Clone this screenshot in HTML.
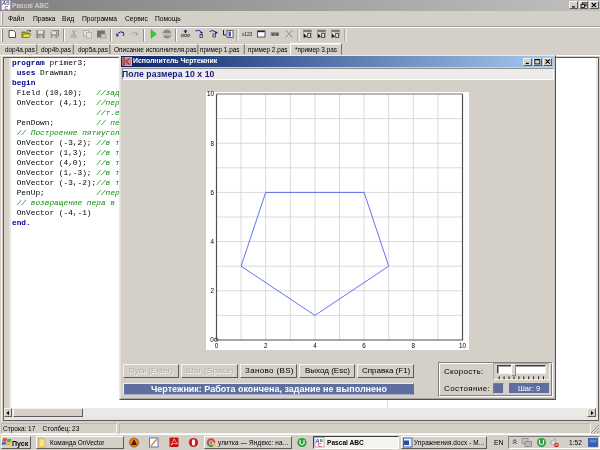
<!DOCTYPE html>
<html><head><meta charset="utf-8">
<style>
*{margin:0;padding:0;box-sizing:border-box}
html,body{width:600px;height:450px;overflow:hidden;background:#D4D0C8;font-family:"Liberation Sans",sans-serif;position:relative}
.a{position:absolute}
.t{will-change:transform;position:absolute;white-space:pre;font-size:6.7px;color:#000;line-height:1}
.btn{position:absolute;background:#D4D0C8;border:1px solid;border-color:#F4F3F0 #5A5A5A #5A5A5A #F4F3F0}
.code{will-change:transform;position:absolute;font-family:"Liberation Mono",monospace;font-size:7.8px;white-space:pre;line-height:10px;color:#000}
.kw{color:#000090;font-weight:bold}
.cm{color:#109010;font-style:italic}
.dis{color:#ACACAC;text-shadow:0.5px 0.5px 0 #F8F8F8}
svg{will-change:transform}
</style></head><body>

<!-- Title bar -->
<div class="a" style="left:0;top:0;width:600px;height:10.5px;background:linear-gradient(to right,#808080,#C0C0C0)"></div>
<svg class="a" style="left:0;top:0" width="12" height="11" viewBox="0 0 12 11">
<rect x="1.3" y="0.5" width="9.2" height="9.5" fill="#fff" stroke="#B08CC8" stroke-width="0.9"/>
<text x="1.9" y="5.3" font-size="5.6" font-weight="bold" font-style="italic" fill="#2838B0" font-family="Liberation Sans">A</text>
<text x="6.3" y="4.9" font-size="4.6" font-weight="bold" fill="#209040" font-family="Liberation Sans">B</text>
<text x="4.4" y="9.6" font-size="5.4" font-weight="bold" fill="#F02828" font-family="Liberation Sans">C</text>
</svg>
<div class="t" style="left:12px;top:2.7px;font-size:6.6px;font-weight:bold;color:#D0CCC4">Pascal ABC</div>
<div class="btn" style="left:569px;top:1px;width:9.3px;height:8.3px"></div>
<div class="btn" style="left:579px;top:1px;width:9px;height:8.3px"></div>
<div class="btn" style="left:589px;top:1px;width:9.5px;height:8.3px"></div>
<svg class="a" style="left:569px;top:1px" width="30" height="9" viewBox="569 1 30 9">
<rect x="572" y="6.3" width="3" height="1.2" fill="#000"/>
<rect x="582.5" y="2.8" width="3.5" height="3" fill="none" stroke="#000" stroke-width="0.8"/>
<rect x="581" y="4.5" width="3.5" height="3" fill="#D4D0C8" stroke="#000" stroke-width="0.8"/>
<path d="M591.8,3 L596,7.2 M596,3 L591.8,7.2" stroke="#000" stroke-width="1.1"/>
</svg>

<!-- Menu bar -->
<div class="a" style="left:1px;top:12px;height:13px;border-left:1px solid #F4F4F4;border-right:1px solid #9C9C9C;width:2px"></div>
<div class="t" style="left:8px;top:15.5px">Файл</div>
<div class="t" style="left:32.5px;top:15.5px">Правка</div>
<div class="t" style="left:62px;top:15.5px">Вид</div>
<div class="t" style="left:81.5px;top:15.5px">Программа</div>
<div class="t" style="left:125px;top:15.5px">Сервис</div>
<div class="t" style="left:155px;top:15.5px">Помощь</div>
<div class="a" style="left:0;top:26px;width:600px;height:1px;background:#A0A0A0"></div>
<div class="a" style="left:0;top:27px;width:600px;height:1px;background:#fff"></div>

<!-- Toolbar -->
<svg class="a" style="will-change:transform;left:0;top:26px" width="360" height="18" viewBox="0 26 360 18">
<g stroke-width="1">
<line x1="1.5" y1="29" x2="1.5" y2="41.5" stroke="#fff"/><line x1="2.5" y1="29" x2="2.5" y2="41.5" stroke="#808080"/>
<line x1="63.5" y1="29" x2="63.5" y2="41.5" stroke="#909090"/><line x1="64.5" y1="29" x2="64.5" y2="41.5" stroke="#fff"/>
<line x1="110.5" y1="29" x2="110.5" y2="41.5" stroke="#909090"/><line x1="111.5" y1="29" x2="111.5" y2="41.5" stroke="#fff"/>
<line x1="143.5" y1="29" x2="143.5" y2="41.5" stroke="#909090"/><line x1="144.5" y1="29" x2="144.5" y2="41.5" stroke="#fff"/>
<line x1="175.5" y1="29" x2="175.5" y2="41.5" stroke="#909090"/><line x1="176.5" y1="29" x2="176.5" y2="41.5" stroke="#fff"/>
<line x1="237" y1="29" x2="237" y2="41.5" stroke="#909090"/><line x1="238" y1="29" x2="238" y2="41.5" stroke="#fff"/>
<line x1="298" y1="29" x2="298" y2="41.5" stroke="#909090"/><line x1="299" y1="29" x2="299" y2="41.5" stroke="#fff"/>
<line x1="345" y1="29" x2="345" y2="41.5" stroke="#909090"/><line x1="346" y1="29" x2="346" y2="41.5" stroke="#fff"/>
</g>
<!-- new -->
<path d="M9,30.5 H13.5 L15.5,32.5 V37.5 H9 Z" fill="#fff" stroke="#404040" stroke-width="0.9"/>
<!-- open -->
<path d="M22,32 H25 L26,33 H29 V37.5 H22 Z" fill="#B8B020" stroke="#505010" stroke-width="0.7"/>
<path d="M22,37.5 L24,34 H31 L29,37.5 Z" fill="#E8E040" stroke="#606010" stroke-width="0.6"/>
<path d="M26.5,31.5 Q28.5,29.3 30.8,31" fill="none" stroke="#303030" stroke-width="0.8"/><path d="M30.2,30 L31.2,31.6 L29.4,31.8 Z" fill="#303030"/>
<!-- save gray -->
<rect x="36.3" y="30.3" width="8.4" height="7.8" fill="#8A8A8A"/>
<rect x="38" y="30.6" width="5" height="3.2" fill="#E4E4E4"/>
<rect x="38.6" y="35.3" width="3.8" height="2.8" fill="#C8C8C8"/>
<rect x="39.3" y="35.8" width="1.2" height="1.8" fill="#8A8A8A"/>
<!-- save all gray -->
<rect x="52.5" y="30" width="6.5" height="6.5" fill="#8A8A8A"/>
<rect x="50.3" y="31.3" width="7.2" height="6.8" fill="#949494" stroke="#D4D0C8" stroke-width="0.5"/>
<rect x="51.8" y="31.6" width="4.2" height="2.6" fill="#E4E4E4"/>
<rect x="52.2" y="35.5" width="3.2" height="2.6" fill="#C8C8C8"/>
<!-- cut -->
<path d="M72,30 L75,35 M75.5,30 L72.5,35" stroke="#909090" stroke-width="0.8" fill="none"/>
<circle cx="72.3" cy="36.5" r="1.2" fill="none" stroke="#909090" stroke-width="0.7"/><circle cx="75.3" cy="36.5" r="1.2" fill="none" stroke="#909090" stroke-width="0.7"/>
<!-- copy -->
<rect x="83.5" y="30.5" width="5" height="5.5" fill="#E4E2DE" stroke="#A8A8A8" stroke-width="0.8"/>
<rect x="86.5" y="32.5" width="5" height="5.5" fill="#E4E2DE" stroke="#A8A8A8" stroke-width="0.8"/>
<!-- paste -->
<rect x="97" y="30.5" width="8" height="7" fill="#707070"/>
<rect x="101" y="34" width="5" height="4" fill="#C8C8C8" stroke="#909090" stroke-width="0.6"/>
<!-- undo -->
<path d="M117.5,34 Q120,30.5 123.5,32.5 Q124.5,34 123,36" fill="none" stroke="#1010A0" stroke-width="1"/>
<path d="M116,33 L119,36 L116.5,36.5 Z" fill="#1010A0"/>
<!-- redo -->
<path d="M131,35 Q133,31 136.5,32.5" fill="none" stroke="#A8A8A8" stroke-width="0.9"/>
<path d="M136,32 L138.5,34.5 L135.5,35.5 Z" fill="#A0A0A0"/>
<!-- run -->
<path d="M151,29.5 L156.5,34 L151,38.5 Z" fill="#30D030" stroke="#20A020" stroke-width="0.4"/>
<!-- stop -->
<circle cx="167" cy="34" r="4.9" fill="#B8B8B8"/>
<circle cx="167" cy="34" r="4.2" fill="#888888"/>
<text x="167" y="35.5" font-size="3.6" font-weight="bold" fill="#E8E8E8" text-anchor="middle" font-family="Liberation Sans" letter-spacing="-0.15">STOP</text>
<!-- step into -->
<path d="M185.5,29.5 L187.5,31.5 H186.2 V33 H184.8 V31.5 H183.5 Z" fill="#1010A0"/>
<circle cx="182.5" cy="35.5" r="1.2" fill="none" stroke="#202020" stroke-width="0.7"/><circle cx="185.5" cy="35.5" r="1.2" fill="none" stroke="#202020" stroke-width="0.7"/><circle cx="188.5" cy="35.5" r="1.2" fill="none" stroke="#202020" stroke-width="0.7"/>
<!-- step over -->
<path d="M195.5,31 Q199,29 201.5,32" fill="none" stroke="#1010A0" stroke-width="0.9"/>
<path d="M200,32 L203,32 L201.5,34 Z" fill="#1010A0"/>
<rect x="200" y="34.5" width="2.5" height="3" fill="none" stroke="#202020" stroke-width="0.7"/>
<path d="M209.5,31.5 Q213,29 216,32.5" fill="none" stroke="#1010A0" stroke-width="0.9"/>
<path d="M215.5,31 L218,33 L215,34 Z" fill="#1010A0"/>
<rect x="213" y="34" width="2.5" height="3" fill="none" stroke="#202020" stroke-width="0.7"/>
<!-- run to cursor -->
<path d="M223.5,30 V35 H226" fill="none" stroke="#1010A0" stroke-width="1"/>
<rect x="227" y="30.5" width="6" height="7" fill="#fff" stroke="#404040" stroke-width="0.8"/>
<rect x="228.5" y="31.5" width="2.5" height="5" fill="#5050C0"/>
<!-- x123 -->
<text x="242" y="36" font-size="5" fill="#202020" font-family="Liberation Sans" letter-spacing="-0.2">x123</text>
<!-- window -->
<rect x="257.5" y="30.8" width="7.5" height="6.2" fill="#fff" stroke="#303030" stroke-width="0.8"/>
<rect x="258" y="31" width="6.5" height="1.2" fill="#1010A0"/>
<!-- glasses -->
<path d="M270.5,33 H279" stroke="#404040" stroke-width="0.8"/>
<ellipse cx="273" cy="34.5" rx="2" ry="1.5" fill="#606060"/><ellipse cx="277" cy="34.5" rx="2" ry="1.5" fill="#606060"/>
<!-- X -->
<path d="M285.5,30 L292.5,37.5 M292.5,30 L285.5,37.5" stroke="#8A8A8A" stroke-width="0.9"/>
<!-- 3 icons -->
<rect x="303.5" y="30" width="8" height="7.8" fill="#E4E4E4" stroke="#8A8A8A" stroke-width="0.6"/>
<rect x="303.5" y="30" width="8" height="2.2" fill="#7A7A7A"/>
<path d="M303.8,33.2 L307.1,36.6 L303.8,37.8 Z" fill="#202020"/>
<rect x="307.7" y="33.3" width="2.8" height="4" fill="none" stroke="#303030" stroke-width="0.8"/>
<rect x="317.5" y="30" width="8" height="7.8" fill="#E4E4E4" stroke="#8A8A8A" stroke-width="0.6"/>
<rect x="317.5" y="30" width="8" height="2.2" fill="#7A7A7A"/>
<path d="M317.8,33.2 L321.1,36.6 L317.8,37.8 Z" fill="#202020"/>
<rect x="321.7" y="33.3" width="2.8" height="4" fill="none" stroke="#303030" stroke-width="0.8"/>
<rect x="331.5" y="30" width="8" height="7.8" fill="#E4E4E4" stroke="#8A8A8A" stroke-width="0.6"/>
<rect x="331.5" y="30" width="8" height="2.2" fill="#7A7A7A"/>
<path d="M331.8,33.2 L335.1,36.6 L331.8,37.8 Z" fill="#202020"/>
<rect x="335.7" y="33.3" width="2.8" height="4" fill="none" stroke="#303030" stroke-width="0.8"/>
</svg>
<!-- Tabs -->
<div class="a" style="left:0;top:43.5px;width:341px;height:1px;background:#EEEDEA"></div>
<div class="a" style="left:290px;top:43px;width:52px;height:11.5px;border:1px solid;border-color:#fff #707070 transparent #fff"></div>
<svg class="a" style="left:0;top:43px" width="600" height="14" viewBox="0 43 600 14">
<g stroke-width="1">
<line x1="36.8" y1="44.5" x2="36.8" y2="54" stroke="#787878" stroke-width="1.2"/>
<line x1="73.3" y1="44.5" x2="73.3" y2="54" stroke="#787878" stroke-width="1.2"/>
<line x1="109.8" y1="44.5" x2="109.8" y2="54" stroke="#787878" stroke-width="1.2"/>
<line x1="197.8" y1="44.5" x2="197.8" y2="54" stroke="#787878" stroke-width="1.2"/>
<line x1="244.3" y1="44.5" x2="244.3" y2="54" stroke="#787878" stroke-width="1.2"/>
</g>
</svg>
<div class="t" style="left:5px;top:47px;font-size:6.4px">dop4a.pas</div>
<div class="t" style="left:41px;top:47px;font-size:6.4px">dop4b.pas</div>
<div class="t" style="left:78px;top:47px;font-size:6.4px">dop5a.pas</div>
<div class="t" style="left:113.5px;top:47px;font-size:6.5px">Описание исполнителя.pas</div>
<div class="t" style="left:200px;top:47px;font-size:6.4px">пример 1.pas</div>
<div class="t" style="left:248px;top:47px;font-size:6.4px">пример 2.pas</div>
<div class="t" style="left:295px;top:46.5px;font-size:6.4px">*пример 3.pas</div>
<div class="a" style="left:0;top:54.5px;width:600px;height:1px;background:#fff"></div>

<!-- Editor -->
<div class="a" style="left:0.5px;top:55px;width:1px;height:366px;background:#F0EFEC"></div>
<div class="a" style="left:3px;top:57px;width:596px;height:364px;border:1px solid #5A5A5A;background:#E8E6E2"></div>
<div class="a" style="left:3.7px;top:58.3px;width:592.8px;height:359px;background:#fff"></div>
<div class="a" style="left:3.7px;top:58.3px;width:7px;height:350px;background:linear-gradient(to right,#D4D0C8 0,#D4D0C8 5px,#E6E4E0 5px)"></div>
<div class="a" style="left:386.8px;top:58px;width:1px;height:350px;background:#E0E0E0"></div>
<div class="code" style="left:12px;top:58px"><span class="kw">program</span> primer3;
 <span class="kw">uses</span> Drawman;
<span class="kw">begin</span>
 Field (10,10);   <span class="cm">//задание поля</span>
 OnVector (4,1);  <span class="cm">//перемещение</span>
                  <span class="cm">//т.е. в точку</span>
 PenDown;         <span class="cm">// перо опущено</span>
 <span class="cm">// Построение пятиугольника</span>
 OnVector (-3,2); <span class="cm">//в точку</span>
 OnVector (1,3);  <span class="cm">//в точку</span>
 OnVector (4,0);  <span class="cm">//в точку</span>
 OnVector (1,-3); <span class="cm">//в точку</span>
 OnVector (-3,-2);<span class="cm">//в точку</span>
 PenUp;           <span class="cm">//перо поднято</span>
 <span class="cm">// возвращение пера в начало</span>
 OnVector (-4,-1)
<span class="kw">end.</span></div>

<!-- H scrollbar -->
<div class="a" style="left:3.7px;top:408.3px;width:592.8px;height:9px;background:#EBE9E5"></div>
<div class="btn" style="left:3.7px;top:408.3px;width:8.8px;height:9px"></div>
<div class="btn" style="left:12.5px;top:408.3px;width:70.2px;height:9px"></div>
<div class="btn" style="left:587px;top:408.3px;width:9.3px;height:9px"></div>
<svg class="a" style="left:0;top:405px" width="600" height="15" viewBox="0 405 600 15">
<path d="M6.5,413 L9,410.8 V415.2 Z" fill="#000"/>
<path d="M593.5,413 L591,410.8 V415.2 Z" fill="#000"/>
</svg>

<!-- Dialog -->
<div class="a" style="left:119px;top:54.5px;width:437px;height:345.5px;background:#D4D0C8;border:1px solid;border-color:#ECEAE6 #505050 #505050 #ECEAE6"></div>
<div class="a" style="left:120px;top:55.5px;width:435px;height:343.5px;border:1px solid;border-color:#E2E0DA #C8C6C0 #A8A6A0 #E2E0DA"></div>
<div class="a" style="left:121.3px;top:56.4px;width:432.5px;height:10.3px;background:linear-gradient(to right,#0A246A,#A6CAF0)"></div>
<svg class="a" style="left:122px;top:56px" width="11" height="11" viewBox="122 56 11 11">
<rect x="122.5" y="57" width="9.5" height="9" fill="#D08078"/>
<rect x="123" y="57.5" width="8.5" height="8" fill="none" stroke="#E8B0A8" stroke-width="0.8"/>
<path d="M124,57 V66 M129.5,58.5 L125.8,61.5 L129.5,64.5" fill="none" stroke="#801818" stroke-width="1"/>
</svg>
<div class="t" style="left:133px;top:58.3px;font-size:6.9px;font-weight:bold;color:#fff">Исполнитель Чертежник</div>
<div class="btn" style="left:523.3px;top:57.5px;width:8.7px;height:8.2px"></div>
<div class="btn" style="left:532.8px;top:57.5px;width:8.9px;height:8.2px"></div>
<div class="btn" style="left:543.1px;top:57.5px;width:9.2px;height:8.2px"></div>
<svg class="a" style="left:523px;top:57px" width="30" height="9" viewBox="523 57 30 9">
<rect x="525.8" y="62.8" width="3" height="1.2" fill="#000"/>
<rect x="534.8" y="59.3" width="5" height="4.6" fill="none" stroke="#000" stroke-width="0.8"/>
<rect x="534.8" y="59" width="5" height="1.2" fill="#000"/>
<path d="M545.6,59.4 L549.8,63.6 M549.8,59.4 L545.6,63.6" stroke="#000" stroke-width="1.1"/>
</svg>
<div class="a" style="left:122px;top:68px;width:431.5px;height:12px;background:#EDECEA;border:1px solid;border-color:#909090 #fff #fff #909090"></div>
<div class="t" style="left:121.5px;top:70px;font-size:8.7px;letter-spacing:0.07px;font-weight:bold;color:#18188C">Поле размера 10 x 10</div>

<!-- Canvas -->
<div class="a" style="left:205.5px;top:91.5px;width:263px;height:258.5px;background:#fff"></div>
<svg class="a" style="left:0;top:0" width="600" height="450" viewBox="0 0 600 450">
<g stroke="#D6D6D6" stroke-width="0.9"><line x1="241.1" y1="94" x2="241.1" y2="340"/><line x1="265.7" y1="94" x2="265.7" y2="340"/><line x1="290.3" y1="94" x2="290.3" y2="340"/><line x1="314.9" y1="94" x2="314.9" y2="340"/><line x1="339.5" y1="94" x2="339.5" y2="340"/><line x1="364.1" y1="94" x2="364.1" y2="340"/><line x1="388.7" y1="94" x2="388.7" y2="340"/><line x1="413.3" y1="94" x2="413.3" y2="340"/><line x1="437.9" y1="94" x2="437.9" y2="340"/><line x1="216.5" y1="315.4" x2="462.5" y2="315.4"/><line x1="216.5" y1="290.8" x2="462.5" y2="290.8"/><line x1="216.5" y1="266.2" x2="462.5" y2="266.2"/><line x1="216.5" y1="241.6" x2="462.5" y2="241.6"/><line x1="216.5" y1="217.0" x2="462.5" y2="217.0"/><line x1="216.5" y1="192.4" x2="462.5" y2="192.4"/><line x1="216.5" y1="167.8" x2="462.5" y2="167.8"/><line x1="216.5" y1="143.2" x2="462.5" y2="143.2"/><line x1="216.5" y1="118.6" x2="462.5" y2="118.6"/></g>
<path d="M216.5,94 V340 H462.5 V94" fill="none" stroke="#505050" stroke-width="1.2"/>
<line x1="216.5" y1="94" x2="462.5" y2="94" stroke="#707070" stroke-width="1.2"/>
<polyline fill="none" stroke="#4858F0" stroke-width="0.85" points="314.9,315.4 241.1,266.2 265.7,192.4 364.1,192.4 388.7,266.2 314.9,315.4"/>
<g font-family="Liberation Sans" font-size="6.3" fill="#000"><text x="216.5" y="348" text-anchor="middle">0</text><text x="265.7" y="348" text-anchor="middle">2</text><text x="314.9" y="348" text-anchor="middle">4</text><text x="364.1" y="348" text-anchor="middle">6</text><text x="413.3" y="348" text-anchor="middle">8</text><text x="462.5" y="348" text-anchor="middle">10</text><text x="214" y="293.1" text-anchor="end">2</text><text x="214" y="243.9" text-anchor="end">4</text><text x="214" y="194.7" text-anchor="end">6</text><text x="214" y="145.5" text-anchor="end">8</text><text x="214" y="96.3" text-anchor="end">10</text><text x="213.8" y="341.9" text-anchor="end">0</text></g>
<ellipse cx="216.2" cy="339.8" rx="1.9" ry="1.6" fill="none" stroke="#404040" stroke-width="0.9"/>

</svg>

<!-- Buttons -->
<div class="btn" style="left:123px;top:364px;width:56px;height:14px"></div>
<div class="btn" style="left:180.5px;top:364px;width:57px;height:14px"></div>
<div class="btn" style="left:240px;top:364px;width:56.5px;height:14px"></div>
<div class="btn" style="left:299px;top:364px;width:56px;height:14px"></div>
<div class="btn" style="left:357px;top:364px;width:57px;height:14px"></div>
<div class="t dis" style="left:129px;top:367px;font-size:8px">Пуск (Enter)</div>
<div class="t dis" style="left:186px;top:367px;font-size:8px;letter-spacing:0.3px">Шаг (Space)</div>
<div class="t" style="left:245px;top:367px;font-size:8px;letter-spacing:0.35px">Заново (BS)</div>
<div class="t" style="left:305px;top:367px;font-size:8px">Выход (Esc)</div>
<div class="t" style="left:362px;top:367px;font-size:8px">Справка (F1)</div>
<div class="a" style="left:123px;top:382.5px;width:290.5px;height:12px;background:#5F6E9E;border:1px solid;border-color:#ECECF0 #5F6E9E #A4ACCC #ECECF0"></div>
<div class="t" style="left:150.8px;top:385px;font-size:9px;font-weight:bold;color:#fff">Чертежник: Работа окончена, задание не выполнено</div>

<!-- Group box -->
<div class="a" style="left:438px;top:361.5px;width:114.5px;height:35px;border:1px solid;border-color:#808080 #fff #fff #808080"></div>
<div class="a" style="left:439px;top:362.5px;width:112.5px;height:33px;border:1px solid;border-color:#fff #808080 #808080 #fff"></div>
<div class="t" style="left:443.5px;top:367.5px;font-size:8px;letter-spacing:0.3px">Скорость:</div>
<div class="t" style="left:443.5px;top:385px;font-size:8px;letter-spacing:0.4px">Состояние:</div>
<div class="a" style="left:493px;top:363px;width:57px;height:17px;border:1px solid;border-color:#A8A8A8 #F0F0F0 #F0F0F0 #A8A8A8"></div>
<div class="a" style="left:497px;top:365px;width:49px;height:8.6px;background:#fff;border:1px solid;border-color:#404040 #F0F0F0 #F0F0F0 #404040;box-shadow:inset 1px 1px 0 #A0A0A0"></div>
<div class="a" style="left:511.3px;top:364px;width:4.6px;height:11.5px;background:#D8D5CE;border:1px solid;border-color:#fff #8A8A8A #8A8A8A #fff"></div>
<svg class="a" style="left:490px;top:374px" width="60" height="6" viewBox="490 374 60 6">
<line x1="499.2" y1="376.4" x2="499.2" y2="379.2" stroke="#000" stroke-width="0.9"/><line x1="504.1" y1="376.4" x2="504.1" y2="379.2" stroke="#000" stroke-width="0.9"/><line x1="509.0" y1="376.4" x2="509.0" y2="379.2" stroke="#000" stroke-width="0.9"/><line x1="514.0" y1="376.4" x2="514.0" y2="379.2" stroke="#000" stroke-width="0.9"/><line x1="518.9" y1="376.4" x2="518.9" y2="379.2" stroke="#000" stroke-width="0.9"/><line x1="523.8" y1="376.4" x2="523.8" y2="379.2" stroke="#000" stroke-width="0.9"/><line x1="528.7" y1="376.4" x2="528.7" y2="379.2" stroke="#000" stroke-width="0.9"/><line x1="533.6" y1="376.4" x2="533.6" y2="379.2" stroke="#000" stroke-width="0.9"/><line x1="538.6" y1="376.4" x2="538.6" y2="379.2" stroke="#000" stroke-width="0.9"/><line x1="543.5" y1="376.4" x2="543.5" y2="379.2" stroke="#000" stroke-width="0.9"/>
</svg>
<div class="a" style="left:493px;top:383px;width:11px;height:11px;background:#5F6E9E;border:1px solid;border-color:#7C7C84 #C8CCD8 #C8CCD8 #7C7C84"></div>
<div class="a" style="left:508.6px;top:383.4px;width:40.3px;height:9.2px;background:#5F6E9E"></div>
<div class="t" style="left:518px;top:385px;font-size:7.5px;color:#fff">Шаг: 9</div>


<!-- Status bar -->
<div class="a" style="left:1px;top:422.5px;width:116px;height:11px;border:1px solid;border-color:#BCB8B0 #F4F3F0 #F4F3F0 #BCB8B0"></div>
<div class="a" style="left:118.5px;top:422.5px;width:472px;height:11px;border:1px solid;border-color:#BCB8B0 #F4F3F0 #F4F3F0 #BCB8B0"></div>
<div class="t" style="left:3px;top:426px;font-size:6.5px">Строка: 17    Столбец: 23</div>
<svg class="a" style="left:588px;top:423px" width="12" height="11" viewBox="588 423 12 11">
<path d="M591,433 L599,425 M594,433 L599,428 M597,433 L599,431" stroke="#808080" stroke-width="0.8"/>
<path d="M592,433 L599,426 M595,433 L599,429" stroke="#fff" stroke-width="0.5"/>
</svg>

<!-- Taskbar -->
<div class="a" style="left:0;top:434px;width:600px;height:16px;background:#D4D0C8;border-top:1px solid #fff"></div>
<div class="btn" style="left:1px;top:436px;width:29.5px;height:12.5px;border-color:#fff #5C5C5C #5C5C5C #fff"></div>
<svg class="a" style="left:0;top:434px" width="600" height="16" viewBox="0 434 600 16">
<!-- windows flag -->
<path d="M3,438.5 Q5,437.5 7,438.5 L6.3,441.5 Q4.3,440.5 2.3,441.5 Z" fill="#E85020"/>
<path d="M7.5,438.7 Q9.5,439.5 11.5,438.7 L10.8,441.7 Q8.8,442.5 6.8,441.7 Z" fill="#50B030"/>
<path d="M2.2,442 Q4.2,441 6.2,442 L5.5,445 Q3.5,444 1.5,445 Z" fill="#3070D8"/>
<path d="M6.7,442.2 Q8.7,443 10.7,442.2 L10,445.2 Q8,446 6,445.2 Z" fill="#F0B820"/>
<!-- quick launch: aimp -->
<circle cx="134" cy="442.5" r="4.6" fill="#F08018" stroke="#804010" stroke-width="0.6"/>
<path d="M134,439.3 L137,445 H131 Z" fill="#402000"/>
<!-- note -->
<rect x="149.5" y="438" width="8.5" height="9" fill="#fff" stroke="#4070C0" stroke-width="0.9"/>
<path d="M151,446 L157,439" stroke="#F08020" stroke-width="1.4"/>
<!-- adobe -->
<rect x="169.5" y="437.5" width="9" height="9.5" fill="#C81010" rx="0.8"/>
<path d="M171,445 Q174,440 174,438.8 Q175,441 177.5,444 Q173.5,442.5 171,445 Z" fill="none" stroke="#fff" stroke-width="0.6"/>
<!-- opera -->
<circle cx="193.5" cy="442.5" r="4.6" fill="#D01818"/>
<ellipse cx="193.5" cy="442.5" rx="1.6" ry="3.2" fill="#fff"/>
<!-- utorrent -->
<circle cx="302" cy="442.5" r="4.6" fill="#28A040"/>
<path d="M300,440 V443.5 Q302,446 304,443.5 V440" fill="none" stroke="#fff" stroke-width="1.1"/>
<!-- tray -->
<path d="M513,441.5 L514.8,439.5 L516.6,441.5 M513,443.8 L514.8,441.8 L516.6,443.8" fill="none" stroke="#000" stroke-width="0.7"/>
<rect x="522" y="438.5" width="6" height="5" fill="#C8C8C8" stroke="#707070" stroke-width="0.6"/>
<rect x="525" y="441.5" width="6.5" height="5" fill="#B8B8B8" stroke="#707070" stroke-width="0.6"/>
<circle cx="541.5" cy="442.5" r="4.5" fill="#28A040"/>
<path d="M539.5,440 V443.5 Q541.5,446 543.5,443.5 V440" fill="none" stroke="#fff" stroke-width="1.1"/>
<path d="M551,441 H552.5 L555,438.5 V446.5 L552.5,444 H551 Z" fill="#E8E8E8" stroke="#808080" stroke-width="0.6"/>
<circle cx="556.5" cy="445" r="2.3" fill="#E02020"/>
<path d="M555.5,444 L557.5,446 M557.5,444 L555.5,446" stroke="#fff" stroke-width="0.6"/>
<rect x="588.5" y="438.5" width="9" height="8" fill="#2A60C0" stroke="#103070" stroke-width="0.5"/>
<rect x="589.5" y="439.5" width="7" height="3" fill="#5090E0"/>
</svg>
<div class="t" style="left:12.3px;top:439.5px;font-size:7px;font-weight:bold">Пуск</div>
<div class="btn" style="left:36px;top:436px;width:88px;height:12.5px;border-color:#fff #5C5C5C #5C5C5C #fff"></div>
<svg class="a" style="left:36px;top:436px" width="12" height="13" viewBox="36 436 12 13">
<path d="M38.5,438 H42.5 L45,439.5 V447 H38.5 Z" fill="#E8D070" stroke="#B09030" stroke-width="0.5"/>
<rect x="39.5" y="439.5" width="5" height="7" fill="#F4E490"/>
</svg>
<div class="t" style="left:50px;top:439.5px;font-size:6.4px">Команда OnVector</div>
<div class="btn" style="left:203.5px;top:436px;width:88px;height:12.5px;border-color:#fff #5C5C5C #5C5C5C #fff"></div>
<svg class="a" style="left:203px;top:436px" width="14" height="13" viewBox="203 436 14 13">
<circle cx="211" cy="442.5" r="4.3" fill="#E04030"/>
<path d="M211,442.5 L207.3,444.6 A4.3,4.3 0 0 0 213.2,446.2 Z" fill="#40A050"/>
<path d="M211,442.5 L213.2,446.2 A4.3,4.3 0 0 0 215.3,442.5 Z" fill="#F0C020"/>
<circle cx="211" cy="442.5" r="1.8" fill="#4080E0" stroke="#fff" stroke-width="0.7"/>
</svg>
<div class="t" style="left:218px;top:439.5px;font-size:6.4px;letter-spacing:0.15px">улитка — Яндекс: на...</div>
<div class="a" style="left:313px;top:436px;width:86px;height:12.5px;background:#F4F3F0;border:1px solid;border-color:#404040 #fff #fff #404040"></div>
<svg class="a" style="left:313px;top:436px" width="14" height="13" viewBox="313 436 14 13">
<rect x="315" y="437.5" width="9" height="9.5" fill="#fff" stroke="#B08CC8" stroke-width="0.8"/>
<text x="315.5" y="442.6" font-size="5.4" font-weight="bold" font-style="italic" fill="#2838B0" font-family="Liberation Sans">A</text>
<text x="319.8" y="442.2" font-size="4.4" font-weight="bold" fill="#209040" font-family="Liberation Sans">B</text>
<text x="318" y="446.8" font-size="5.2" font-weight="bold" fill="#F02828" font-family="Liberation Sans">C</text>
</svg>
<div class="t" style="left:326.5px;top:440px;font-size:6.6px;font-weight:bold">Pascal ABC</div>
<div class="btn" style="left:401px;top:436px;width:86px;height:12.5px;border-color:#fff #5C5C5C #5C5C5C #fff"></div>
<svg class="a" style="left:401px;top:436px" width="14" height="13" viewBox="401 436 14 13">
<rect x="403.5" y="438" width="8.5" height="9" fill="#E8ECF8" stroke="#3050A0" stroke-width="0.8"/>
<rect x="404" y="440.5" width="5" height="4.5" fill="#2050B0"/>
</svg>
<div class="t" style="left:414px;top:439.5px;font-size:6.4px;letter-spacing:0.12px">Упражнения.docx - М...</div>
<div class="t" style="left:494px;top:439.5px;font-size:6.8px">EN</div>
<div class="a" style="left:507.5px;top:436px;width:92.5px;height:13px;border:1px solid;border-color:#808080 #fff #fff #808080"></div>
<div class="t" style="left:569px;top:439.5px;font-size:6.6px">1:52</div>


</body></html>
